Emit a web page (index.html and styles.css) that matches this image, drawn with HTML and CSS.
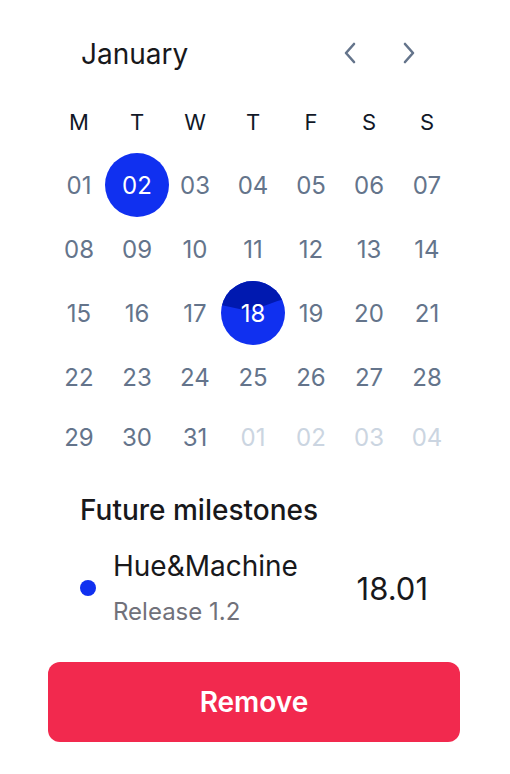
FILE: index.html
```html
<!DOCTYPE html>
<html>
<head>
<meta charset="utf-8">
<link rel="stylesheet" href="styles.css">
</head>
<body>
<div class="panel">
  <div class="calendar">
    <div class="cal-header">
      <span class="month">January</span>
      <div class="nav">
        <svg class="arrow" width="14" height="24" viewBox="0 0 14 24"><path d="M11 3 L3 12 L11 21" fill="none" stroke="#64748b" stroke-width="2.6" stroke-linecap="round" stroke-linejoin="round"/></svg>
        <svg class="arrow" width="14" height="24" viewBox="0 0 14 24"><path d="M3 3 L11 12 L3 21" fill="none" stroke="#64748b" stroke-width="2.6" stroke-linecap="round" stroke-linejoin="round"/></svg>
      </div>
    </div>
    <div class="weekdays">
      <span>M</span><span>T</span><span>W</span><span>T</span><span>F</span><span>S</span><span>S</span>
    </div>
    <div class="days">
      <span class="day">01</span>
      <span class="day selected"><span class="dot-bg"></span><span class="num">02</span></span>
      <span class="day">03</span>
      <span class="day">04</span>
      <span class="day">05</span>
      <span class="day">06</span>
      <span class="day">07</span>
      <span class="day">08</span>
      <span class="day">09</span>
      <span class="day">10</span>
      <span class="day">11</span>
      <span class="day">12</span>
      <span class="day">13</span>
      <span class="day">14</span>
      <span class="day">15</span>
      <span class="day">16</span>
      <span class="day">17</span>
      <span class="day milestone">
        <svg class="wave" width="64" height="64" viewBox="0 0 64 64">
          <defs><clipPath id="c"><circle cx="32" cy="32" r="32"/></clipPath></defs>
          <g clip-path="url(#c)">
            <rect width="64" height="64" fill="#1030f0"/>
            <path d="M0 24 C 12 26, 24 31, 34 28 S 54 20, 64 18 V0 H0 Z" fill="#0019b0"/>
          </g>
        </svg>
        <span class="num">18</span>
      </span>
      <span class="day">19</span>
      <span class="day">20</span>
      <span class="day">21</span>
      <span class="day">22</span>
      <span class="day">23</span>
      <span class="day">24</span>
      <span class="day">25</span>
      <span class="day">26</span>
      <span class="day">27</span>
      <span class="day">28</span>
      <span class="day">29</span>
      <span class="day">30</span>
      <span class="day">31</span>
      <span class="day muted">01</span>
      <span class="day muted">02</span>
      <span class="day muted">03</span>
      <span class="day muted">04</span>
    </div>
  </div>

  <div class="milestones">
    <h2 class="ms-title">Future milestones</h2>
    <div class="ms-item">
      <span class="ms-dot"></span>
      <div class="ms-text">
        <div class="ms-name">Hue&amp;Machine</div>
        <div class="ms-sub">Release 1.2</div>
      </div>
      <div class="ms-date">18.01</div>
    </div>
  </div>

  <button class="remove">Remove</button>
</div>
</body>
</html>
```

FILE: styles.css
```css
* { box-sizing: border-box; }
html, body { margin: 0; padding: 0; background: #ffffff; }
body {
  font-family: Inter, "Noto Sans", "Liberation Sans", sans-serif;
  width: 510px;
  height: 774px;
  overflow: hidden;
}
.panel {
  padding: 34px 0 0 48px;
  width: 460px;
}
.calendar {
  width: 406px;
  margin-left: 2px;
}
.cal-header {
  display: flex;
  align-items: center;
  justify-content: space-between;
  height: 40px;
  padding: 0 40px 0 31px;
}
.month {
  font-size: 28px;
  line-height: 40px;
  color: #18181b;
}
.nav {
  display: flex;
  gap: 45px;
  align-items: center;
  margin-top: -2px;
}
.arrow { display: block; }
.weekdays {
  display: grid;
  grid-template-columns: repeat(7, 58px);
  height: 40px;
  margin-top: 28px;
  align-items: center;
  justify-items: center;
  font-size: 22px;
  color: #111827;
}
.days {
  display: grid;
  grid-template-columns: repeat(7, 58px);
  grid-template-rows: repeat(4, 64px) 56px;
  margin-top: 11px;
  align-items: center;
  justify-items: center;
}
.day {
  position: relative;
  font-size: 24px;
  color: #64748b;
  width: 64px;
  height: 64px;
  display: flex;
  align-items: center;
  justify-content: center;
}
.day.muted { color: #cbd5e1; }
.day.selected .dot-bg {
  position: absolute;
  inset: 0;
  border-radius: 50%;
  background: #1030f0;
}
.day .num {
  position: relative;
  color: #ffffff;
}
.day .wave {
  position: absolute;
  left: 0;
  top: 0;
}
.milestones {
  padding: 28px 0 0 32px;
  width: 412px;
}
.ms-title {
  margin: 0;
  font-size: 28px;
  font-weight: 500;
  line-height: 34px;
  color: #18181b;
}
.ms-item {
  display: flex;
  align-items: center;
  margin-top: 22px;
  padding-right: 32px;
}
.ms-dot {
  width: 16px;
  height: 16px;
  border-radius: 50%;
  background: #1030f0;
  flex: none;
}
.ms-text {
  flex: 1;
  margin-left: 17px;
}
.ms-name {
  font-size: 28px;
  line-height: 34px;
  color: #18181b;
}
.ms-sub {
  margin-top: 14px;
  font-size: 24px;
  line-height: 30px;
  color: #71717a;
}
.ms-date {
  font-size: 31px;
  color: #18181b;
}
.remove {
  display: block;
  margin-top: 35px;
  width: 412px;
  height: 80px;
  border: 0;
  border-radius: 12px;
  background: #f2294e;
  color: #ffffff;
  font-family: Inter, "Noto Sans", "Liberation Sans", sans-serif;
  font-size: 28px;
  font-weight: 600;
}
```
